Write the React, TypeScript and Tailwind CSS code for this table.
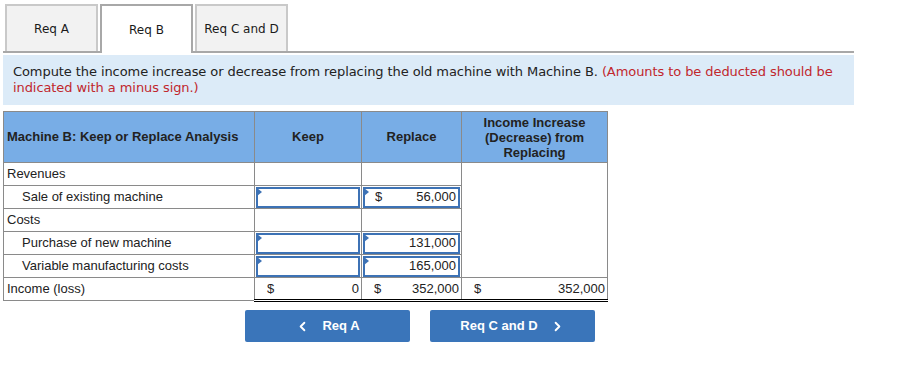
import { ChevronLeft, ChevronRight } from 'lucide-react'

const tabs = ['Req A', 'Req B', 'Req C and D']

// small blue marker shown in the corner of editable cells
function InputCell({ dollar, value }: { dollar?: boolean; value?: string }) {
  return (
    <td className="border border-[#8a8a8a] p-0 h-[23px]">
      <div className="relative mx-[1px] h-[21px] border-2 border-[#3d72b5] flex items-center justify-between px-[10px] pr-[2px]">
        <span className="absolute -left-[1px] -top-[1px] w-0 h-0 border-t-[4px] border-b-[4px] border-l-[5px] border-t-transparent border-b-transparent border-l-[#3d72b5]" />
        <span>{dollar ? '$' : ''}</span>
        <span>{value}</span>
      </div>
    </td>
  )
}

function Plain({ dollar, value, last }: { dollar?: boolean; value?: string; last?: boolean }) {
  return (
    <td className={`border-x border-t border-[#8a8a8a] h-[23px] px-[2px] ${last ? 'border-b-[3px] border-b-black border-double' : 'border-b'}`}>
      <div className="flex justify-between pl-[10px]">
        <span>{dollar ? '$' : ''}</span>
        <span>{value}</span>
      </div>
    </td>
  )
}

export default function App() {
  return (
    <div className="w-[897px] h-[365px] bg-white font-['DejaVu_Sans',sans-serif] text-[#222]">
      <div className="pt-[4px] pl-[3px] w-[854px]">
        <div className="flex items-end gap-[2px] pl-[2px] border-b-2 border-[#a8a8a8]">
          {tabs.map((t) => (
            <div
              key={t}
              className={
                t === 'Req B'
                  ? 'w-[93px] h-[49px] -mb-[2px] bg-white border-2 border-b-0 border-[#a8a8a8] flex items-center justify-center text-[12px] text-[#1a1a1a]'
                  : 'w-[93px] h-[47px] bg-[#f2f2f2] border-2 border-b-0 border-[#c9c9c9] flex items-center justify-center text-[12px] text-[#1a1a1a]'
              }
            >
              {t}
            </div>
          ))}
        </div>
        <div className="mt-[2px] bg-[#dcebf8] h-[50px] pl-[10px] pr-[6px] pt-[9px] text-[13px] leading-[16px] tracking-[-0.08px]">
          Compute the income increase or decrease from replacing the old machine with Machine B.{' '}
          <span className="text-[#c1272d]">(Amounts to be deducted should be indicated with a minus sign.)</span>
        </div>
      </div>

      <div className="pl-[3px] mt-[6px] font-['Liberation_Sans',Arial,sans-serif] text-[13px] text-[#222]">
        <table className="border-collapse table-fixed w-[604px]">
          <colgroup>
            <col className="w-[251px]" />
            <col className="w-[107px]" />
            <col className="w-[100px]" />
            <col className="w-[146px]" />
          </colgroup>
          <thead>
            <tr className="bg-[#78ade6] h-[51px] font-bold text-[13px]">
              <th className="border border-[#8a8a8a] text-left pl-[3px]">Machine B: Keep or Replace Analysis</th>
              <th className="border border-[#8a8a8a]">Keep</th>
              <th className="border border-[#8a8a8a]">Replace</th>
              <th className="border border-[#8a8a8a] leading-[15px]">
                Income Increase
                <br />
                (Decrease) from
                <br />
                Replacing
              </th>
            </tr>
          </thead>
          <tbody>
            <tr>
              <td className="border border-[#8a8a8a] h-[23px] pl-[3px]">Revenues</td>
              <td className="border border-[#8a8a8a]" />
              <td className="border border-[#8a8a8a]" />
              <td className="border-x border-[#8a8a8a]" rowSpan={5} />
            </tr>
            <tr>
              <td className="border border-[#8a8a8a] h-[23px] pl-[18px]">Sale of existing machine</td>
              <InputCell />
              <InputCell dollar value="56,000" />
            </tr>
            <tr>
              <td className="border border-[#8a8a8a] h-[23px] pl-[3px]">Costs</td>
              <td className="border border-[#8a8a8a]" />
              <td className="border border-[#8a8a8a]" />
            </tr>
            <tr>
              <td className="border border-[#8a8a8a] h-[23px] pl-[18px]">Purchase of new machine</td>
              <InputCell />
              <InputCell value="131,000" />
            </tr>
            <tr>
              <td className="border border-[#8a8a8a] h-[23px] pl-[18px]">Variable manufacturing costs</td>
              <InputCell />
              <InputCell value="165,000" />
            </tr>
            <tr>
              <td className="border border-[#8a8a8a] h-[23px] pl-[3px]">Income (loss)</td>
              <Plain dollar value="0" last />
              <Plain dollar value="352,000" last />
              <Plain dollar value="352,000" last />
            </tr>
          </tbody>
        </table>

        <div className="flex gap-[20px] pl-[242px] mt-[8px]">
          <button className="w-[165px] h-[32px] rounded-[2px] bg-[#3a75ba] text-white font-bold text-[13px] flex items-center justify-center gap-[12px]">
            <ChevronLeft size={15} strokeWidth={3} />
            <span>Req A</span>
          </button>
          <button className="w-[165px] h-[32px] rounded-[2px] bg-[#3a75ba] text-white font-bold text-[13px] flex items-center justify-center gap-[12px]">
            <span>Req C and D</span>
            <ChevronRight size={15} strokeWidth={3} />
          </button>
        </div>
      </div>
    </div>
  )
}
